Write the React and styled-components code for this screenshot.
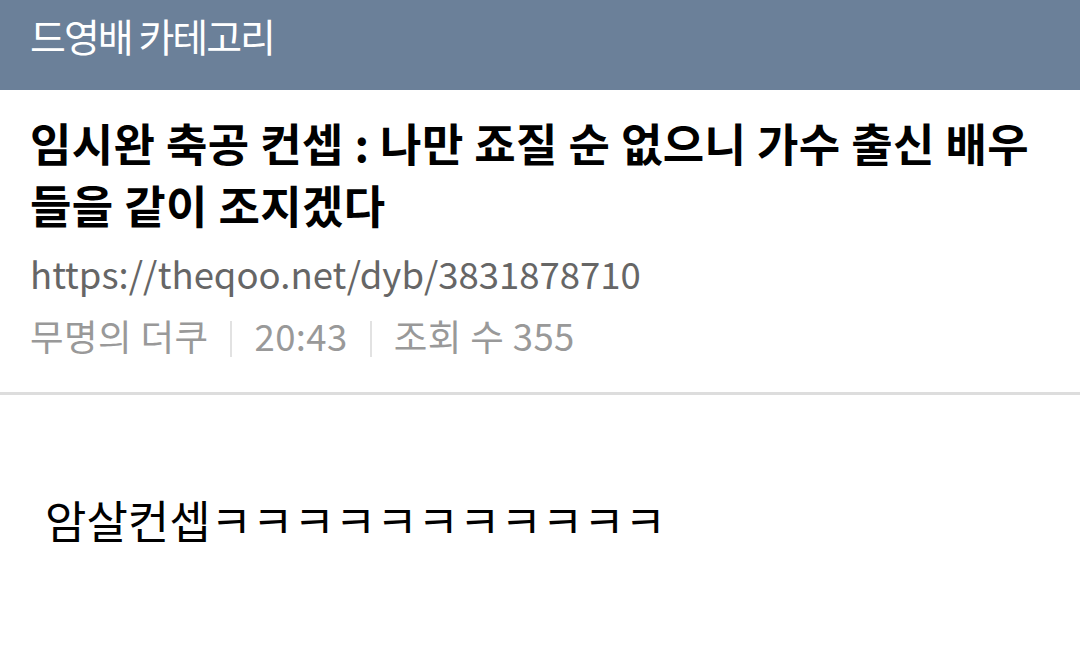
import React from 'react';
import styled, { createGlobalStyle } from 'styled-components';

const GlobalStyle = createGlobalStyle`
  html, body {
    margin: 0;
    padding: 0;
    background: #fff;
  }
  body {
    font-family: "Noto Sans CJK KR", "Noto Sans", sans-serif;
  }
`;

const Page = styled.div`
  width: 1080px;
  height: 663px;
  overflow: hidden;
  background: #fff;
`;

const Header = styled.header`
  height: 90px;
  background-color: #6b8099;
  display: flex;
  align-items: center;
  padding: 0 30px 20px;
  box-sizing: border-box;
`;

const HeaderTitle = styled.h1`
  margin: 0;
  font-size: 39px;
  line-height: 1;
  font-weight: 400;
  color: #fff;
  letter-spacing: -2px;
`;

const PostHead = styled.section`
  padding: 22px 30px 28px;
  border-bottom: 3px solid #dddddd;
`;

const PostTitle = styled.h2`
  margin: 0;
  font-size: 45px;
  line-height: 62px;
  font-weight: 700;
  color: #000;
  letter-spacing: 0.4px;
`;

const PostUrl = styled.div`
  margin-top: 10px;
  font-size: 36.5px;
  line-height: 56px;
  color: #666;
`;

const Meta = styled.div`
  display: flex;
  align-items: center;
  margin-top: 6px;
  font-size: 36.5px;
  line-height: 56px;
  color: #999;
  letter-spacing: 0.4px;
`;

const Sep = styled.span`
  display: inline-block;
  width: 2px;
  height: 36px;
  background: #e2e2e2;
  margin: 6px 22px 0;
`;

const Body = styled.article`
  padding: 95px 45px 0;
`;

const BodyText = styled.p`
  margin: 0;
  font-size: 45px;
  line-height: 60px;
  color: #000;
`;

export default function App() {
  return (
    <Page>
      <GlobalStyle />
      <Header>
        <HeaderTitle>드영배 카테고리</HeaderTitle>
      </Header>
      <PostHead>
        <PostTitle>임시완 축공 컨셉 : 나만 죠질 순 없으니 가수 출신 배우들을 같이 조지겠다</PostTitle>
        <PostUrl>https://theqoo.net/dyb/3831878710</PostUrl>
        <Meta>
          <span>무명의 더쿠</span>
          <Sep />
          <span>20:43</span>
          <Sep />
          <span>조회 수 355</span>
        </Meta>
      </PostHead>
      <Body>
        <BodyText>암살컨셉ㅋㅋㅋㅋㅋㅋㅋㅋㅋㅋㅋ</BodyText>
      </Body>
    </Page>
  );
}
